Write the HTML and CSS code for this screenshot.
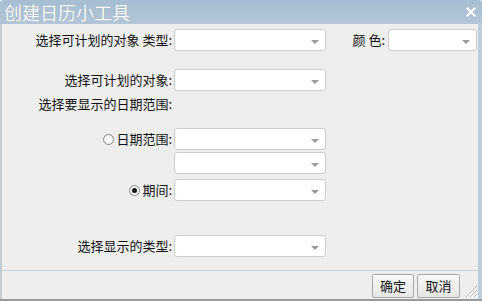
FILE: index.html
```html
<!DOCTYPE html>
<html lang="zh">
<head>
<meta charset="utf-8">
<link rel="stylesheet" href="styles.css">
</head>
<body>
<div class="dialog">
  <div class="titlebar">
    <span class="title">创建日历小工具</span>
    <svg class="close" width="10" height="10" viewBox="0 0 10 10"><path d="M1.5 1.5 L8.5 8.5 M8.5 1.5 L1.5 8.5" stroke="#fff" stroke-width="2.2" stroke-linecap="square"/></svg>
  </div>
  <div class="body">
    <div class="form">
      <div class="row r1">
        <span class="lbl">选择可计划的对象 类型:</span>
        <div class="sel w151"><i class="arrow"></i></div>
        <span class="lbl lbl-color">颜 色:</span>
        <div class="sel w88"><i class="arrow"></i></div>
      </div>
      <div class="row r2">
        <span class="lbl">选择可计划的对象:</span>
        <div class="sel w151"><i class="arrow"></i></div>
      </div>
      <div class="row r3">
        <span class="lbl">选择要显示的日期范围:</span>
      </div>
      <div class="row r4">
        <span class="lbl"><span class="radio"></span>日期范围:</span>
        <div class="sel w151"><i class="arrow"></i></div>
      </div>
      <div class="row r5">
        <span class="lbl"></span>
        <div class="sel w151"><i class="arrow"></i></div>
      </div>
      <div class="row r6">
        <span class="lbl"><span class="radio checked"></span>期间:</span>
        <div class="sel w151"><i class="arrow"></i></div>
      </div>
      <div class="row r7">
        <span class="lbl">选择显示的类型:</span>
        <div class="sel w151"><i class="arrow"></i></div>
      </div>
    </div>
    <div class="footer">
      <button class="btn">确定</button>
      <button class="btn">取消</button>
      <svg class="grip" width="14" height="14" viewBox="0 0 14 14">
        <path d="M13 2 L2 13 M13 6 L6 13 M13 10 L10 13" stroke="#b8b8b8" stroke-width="1"/>
        <path d="M14 3 L3 14 M14 7 L7 14 M14 11 L11 14" stroke="#fff" stroke-width="1"/>
      </svg>
    </div>
  </div>
</div>
</body>
</html>
```
FILE: styles.css
```css
* { box-sizing: border-box; }
html, body { margin: 0; padding: 0; }
body {
  width: 482px;
  height: 301px;
  background: #eeeeee;
  font-family: "Noto Sans CJK SC", "Noto Sans", sans-serif;
  font-size: 13px;
  color: #111;
  overflow: hidden;
}
.dialog {
  width: 482px;
  height: 301px;
  display: flex;
  flex-direction: column;
  background: #bccddb;
  border-radius: 4px 4px 0 0;
  border-bottom: 2px solid #9a9a9a;
  overflow: hidden;
}
.titlebar {
  height: 24px;
  flex: none;
  display: flex;
  align-items: center;
  justify-content: space-between;
  padding: 0 6px 0 4px;
  background: linear-gradient(#a6bed2, #b2c6d7);
}
.title {
  color: #fff;
  font-size: 18px;
  line-height: 24px;
  text-shadow: 0 0 1px rgba(90,110,130,0.5);
}
.close { display: block; }
.body {
  flex: 1;
  display: flex;
  flex-direction: column;
  margin: 0 4px 0 1px;
  background: #eeeeee;
  border-left: 1px solid #c9c9c9;
}
.form {
  flex: 1;
  padding-top: 5px;
}
.row {
  display: flex;
  align-items: center;
  height: 22px;
}
.r2 { margin-top: 18px; }
.r3 { margin-top: 5px; height: 16px; }
.r4 { margin-top: 16px; }
.r5 { margin-top: 2px; }
.r6 { margin-top: 5px; }
.r7 { margin-top: 34px; }
.lbl {
  width: 171px;
  flex: none;
  text-align: right;
  padding-right: 1px;
  line-height: 16px;
  white-space: nowrap;
  display: flex;
  justify-content: flex-end;
  align-items: center;
}
.lbl-color {
  width: 57px;
  margin-left: 4px;
  padding-right: 2px;
}
.sel {
  position: relative;
  height: 22px;
  flex: none;
  margin-left: 1px;
  background: #fff;
  border: 1px solid #cdcdcd;
  border-radius: 3px;
}
.w151 { width: 152px; }
.w88 { width: 89px; }
.arrow {
  position: absolute;
  right: 6px;
  top: 10px;
  width: 0;
  height: 0;
  border-left: 4px solid transparent;
  border-right: 4px solid transparent;
  border-top: 4px solid #9a9a9a;
}
.radio {
  display: inline-block;
  width: 11px;
  height: 11px;
  border-radius: 50%;
  border: 1px solid #8a8a8a;
  background: radial-gradient(#ffffff, #e8e8e8);
  margin-right: 2px;
  position: relative;
}
.radio.checked::after {
  content: "";
  position: absolute;
  left: 2px;
  top: 2px;
  width: 5px;
  height: 5px;
  border-radius: 50%;
  background: #111;
}
.footer {
  height: 29px;
  flex: none;
  border-top: 1px solid #c4d4df;
  display: flex;
  align-items: center;
  justify-content: flex-end;
  gap: 3px;
  padding-right: 18px;
  position: relative;
}
.btn {
  width: 42px;
  height: 24px;
  margin-top: 1px;
  padding: 0;
  font-family: inherit;
  font-size: 13px;
  color: #111;
  background: linear-gradient(#f7f7f7, #e6e6e6);
  border: 1px solid #a8a8a8;
  border-radius: 2px;
}
.btn + .btn { width: 43px; }
.grip {
  position: absolute;
  right: 0;
  bottom: 1px;
}
```
